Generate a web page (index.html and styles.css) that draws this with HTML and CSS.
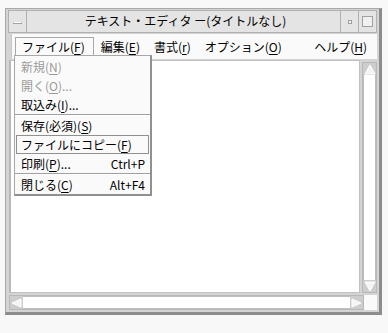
FILE: index.html
```html
<!DOCTYPE html>
<html lang="ja">
<head>
<meta charset="utf-8">
<title>テキスト・エディタ</title>
<link rel="stylesheet" href="styles.css">
</head>
<body>
<div class="window">
  <div class="titlebar">
    <div class="tb-btn menu-btn"><span class="dash"></span></div>
    <div class="title">テキスト・エディタ&nbsp;ー(タイトルなし)</div>
    <div class="tb-btn min-btn"><span class="dot"></span></div>
    <div class="tb-btn max-btn"><span class="square"></span></div>
  </div>
  <div class="menubar">
    <span class="mi active">ファイル(<u>F</u>)</span>
    <span class="mi">編集(<u>E</u>)</span>
    <span class="mi">書式(<u>r</u>)</span>
    <span class="mi">オプション(<u>O</u>)</span>
    <span class="mi help">ヘルプ(<u>H</u>)</span>
  </div>
  <div class="client">
    <div class="edit-row">
      <div class="text-area"></div>
      <div class="vscroll">
        <div class="arrow up"><svg width="12" height="11" viewBox="0 0 12 11"><path d="M6 1 L11 10 L1 10 Z" fill="#f4f4f4" stroke="#fff"/></svg></div>
        <div class="track"></div>
        <div class="arrow down"><svg width="12" height="11" viewBox="0 0 12 11"><path d="M1 1 L11 1 L6 10 Z" fill="#f4f4f4" stroke="#fff"/></svg></div>
      </div>
    </div>
    <div class="hscroll-row">
      <div class="hscroll">
        <div class="arrow left"><svg width="11" height="10" viewBox="0 0 11 10"><path d="M1 5 L10 1 L10 9 Z" fill="#f4f4f4" stroke="#fff"/></svg></div>
        <div class="htrack"></div>
        <div class="arrow right"><svg width="11" height="10" viewBox="0 0 11 10"><path d="M10 5 L1 1 L1 9 Z" fill="#f4f4f4" stroke="#fff"/></svg></div>
      </div>
      <div class="corner"></div>
    </div>
  </div>

  <div class="dropdown">
    <div class="item disabled"><span>新規(<u>N</u>)</span></div>
    <div class="item disabled"><span>開く(<u>O</u>)...</span></div>
    <div class="item"><span>取込み(<u>I</u>)...</span></div>
    <div class="sep"></div>
    <div class="item"><span>保存(必須)(<u>S</u>)</span></div>
    <div class="item focus"><span>ファイルにコピー(<u>F</u>)</span></div>
    <div class="item"><span>印刷(<u>P</u>)...</span><span class="key">Ctrl+P</span></div>
    <div class="sep"></div>
    <div class="item"><span>閉じる(<u>C</u>)</span><span class="key">Alt+F4</span></div>
  </div>
</div>
</body>
</html>
```

FILE: styles.css
```css
body {
	margin: 0;
	background: #f8f8f8;
	font-family: "Noto Sans CJK JP", "DejaVu Sans", sans-serif;
	font-size: 12px;
	color: #000;
}
u {
	text-underline-offset: 2px;
}
.window {
	position: relative;
	box-sizing: border-box;
	width: 377px;
	height: 307px;
	margin: 8px 0 0 5px;
	border: 1px solid #a8a8a8;
	border-right: 3px solid #8c8c8c;
	border-bottom: 3px solid #8c8c8c;
	background: #d4d4d4;
	padding: 1px 2px 0 2px;
	display: flex;
	flex-direction: column;
}
.titlebar {
	display: flex;
	height: 21px;
	background: #e4e4e4;
	border: 1px solid #b0b0b0;
}
.tb-btn {
	width: 17px;
	display: flex;
	align-items: center;
	justify-content: center;
	border-left: 1px solid #b0b0b0;
}
.menu-btn {
	border-left: none;
	border-right: 1px solid #b0b0b0;
}
.dash {
	width: 9px;
	height: 2px;
	border: 1px solid #a0a0a0;
	border-top-color: #fff;
	box-sizing: border-box;
	margin-top: 2px;
}
.dot {
	width: 4px;
	height: 4px;
	border: 1px solid #a0a0a0;
	box-sizing: border-box;
	background: #f4f4f4;
}
.square {
	width: 11px;
	height: 11px;
	border: 1px solid #a0a0a0;
	box-sizing: border-box;
	background: #f0f0f0;
}
.title {
	flex: 1;
	text-align: center;
	line-height: 20px;
	padding-left: 4px;
}
.menubar {
	display: flex;
	align-items: center;
	height: 25px;
	background: #fafafa;
	margin: 1px 0 0 3px;
	padding-left: 3px;
	border-left: 1px solid #c8c8c8;
}
.mi {
	padding: 0 6px;
	line-height: 17px;
	border: 1px solid transparent;
}
.mi.active {
	border-color: #a8a8a8;
	padding: 0 8px 0 6px;
}
.mi.help {
	margin-left: auto;
	margin-right: 3px;
}
.client {
	flex: 1;
	display: flex;
	flex-direction: column;
	padding: 1px 0 2px 1px;
}
.edit-row {
	flex: 1;
	display: flex;
}
.text-area {
	flex: 1;
	background: #fff;
	border: 1px solid #c0c0c0;
	border-left: 2px solid #b8b8b8;
	margin-right: 2px;
}
.vscroll {
	width: 15px;
	margin-top: 2px;
	display: flex;
	flex-direction: column;
	background: #e6e6e6;
	border: 1px solid #b8b8b8;
	box-sizing: border-box;
}
.arrow {
	display: flex;
	align-items: center;
	justify-content: center;
	background: #cdcdcd;
}
.arrow.up, .arrow.down {
	height: 12px;
}
.track {
	flex: 1;
	background: #fff;
	border-left: 1px solid #bdbdbd;
	border-right: 1px solid #bdbdbd;
}
.hscroll-row {
	display: flex;
	height: 15px;
	margin-top: 2px;
}
.hscroll {
	width: 355px;
	display: flex;
	background: #e6e6e6;
	border: 1px solid #b8b8b8;
	box-sizing: border-box;
}
.arrow.left, .arrow.right {
	width: 13px;
}
.htrack {
	flex: 1;
	background: #fff;
	border-top: 1px solid #bdbdbd;
	border-bottom: 1px solid #bdbdbd;
}
.corner {
	flex: 1;
	background: #fafafa;
}
.dropdown {
	position: absolute;
	left: 8px;
	top: 46px;
	width: 138px;
	box-sizing: border-box;
	background: #fafafa;
	border: 1px solid #a8a8a8;
	border-right: 2px solid #909090;
	border-bottom: 2px solid #909090;
	padding: 1px 1px 0 1px;
}
.item {
	display: flex;
	justify-content: space-between;
	height: 19px;
	line-height: 17px;
	padding: 0 3px 0 4px;
	border: 1px solid transparent;
	box-sizing: border-box;
}
.item.disabled {
	color: #9a9a9a;
}
.item.focus {
	border-color: #909090;
}
.sep {
	height: 0;
	border-top: 1px solid #a0a0a0;
	border-bottom: 1px solid #fff;
	margin: 0 -1px;
}
```
